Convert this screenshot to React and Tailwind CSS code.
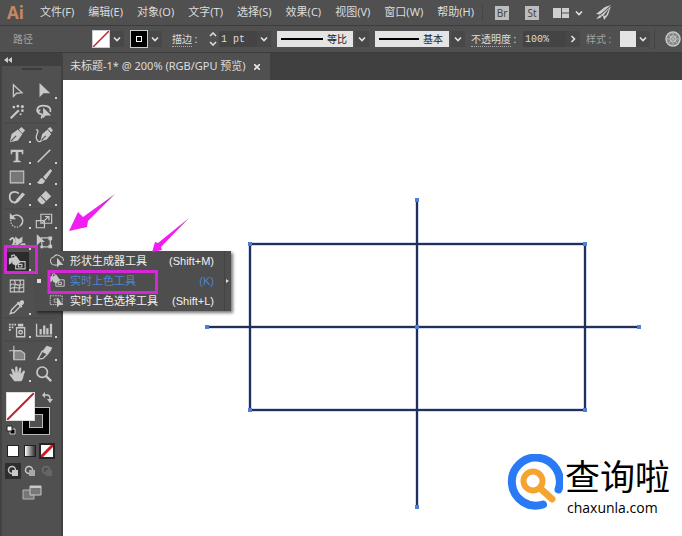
import React from "react";

const MENUS = ["文件(F)", "编辑(E)", "对象(O)", "文字(T)", "选择(S)", "效果(C)", "视图(V)", "窗口(W)", "帮助(H)"];

function Chevron({ right = false }) {
  return (
    <svg className="h-2 w-2" viewBox="0 0 8 8" fill="none" stroke="#e2e2e2" strokeWidth="1.6">
      <path d={right ? "M2.5 1 5.5 4 2.5 7" : "M1 2.5 4 5.5 7 2.5"} />
    </svg>
  );
}

function DropButton({ label, right }) {
  return (
    <button aria-label={label} className="flex h-4 w-3.5 shrink-0 items-center justify-center bg-[#484848]">
      <Chevron right={right} />
    </button>
  );
}

const S = { fill: "none", stroke: "#c8c8c8", strokeWidth: 1.5 };
const F = { fill: "#c8c8c8" };

const ICONS = {
  select: <path {...S} d="M6 3v13l3.500-3.500 6-.5z" />,
  direct: <path {...F} d="M5 1v16l4.500-4.500H17z" />,
  wand: (
    <g>
      <path {...S} strokeWidth="2.400" d="M3 17 12 8" />
      <g {...F}>
        <circle cx="6.500" cy="4.500" r="1.500" /><circle cx="11" cy="3.500" r="1.500" /><circle cx="16" cy="4" r="1.700" />
        <circle cx="16" cy="8.500" r="1.500" /><circle cx="14" cy="12.500" r="1.200" />
      </g>
    </g>
  ),
  lasso: (
    <g>
      <path {...S} strokeWidth="2" d="M6 12C0 10 2 3 9 3s9 3 8 7M6 8c-3 0-3 4 0 4s2 3 1 5" />
      <path {...F} d="M9 5v12l3-3h6z" />
    </g>
  ),
  pen: (
    <g>
      <path {...F} d="M2 18 4 9l7-5 5 5-5 7zM12 4l3-3 4 4-3 3z" />
      <path d="m3 17 6-6" stroke="#505050" strokeWidth="1.200" />
    </g>
  ),
  curve: (
    <g>
      <path {...F} d="M6 17 8 9l6-5 4 5-5 6zM14 3l3-2 3 4-2 2z" />
      <path d="m7 16 5-5" stroke="#505050" strokeWidth="1.200" />
      <path {...S} d="M1 4c6 0-2 7 1 11 1 3 4 3 5 1" />
    </g>
  ),
  text: <path {...F} d="M3 3h14v5h-1.500L15 5.500h-3.500V15l2.500.5V17H6v-1.500L8.500 15V5.500H5L4.500 8H3z" />,
  line: <path {...S} strokeWidth="1.800" d="M3 17 17 3" />,
  rect: <path fill="#777" stroke="#c8c8c8" strokeWidth="1.200" d="M2.500 3.500h15v13h-15z" />,
  brush: <path {...F} d="M17 1 9 10l3 3 7-10zM8 11c-3 0-3 4-6 5 4 3 9 2 9-2z" />,
  shaper: (
    <g>
      <path {...S} strokeWidth="2" d="M12 5C7 1 1 4 2 10s8 6 9 2" />
      <path {...F} d="m7 17 2-5 7-8 3 2-7 8z" />
    </g>
  ),
  eraser: (
    <g>
      <path {...F} d="M3 11 12 2l6 6-9 9H7l-4-4z" />
      <path d="m6.500 8 6 6" stroke="#505050" strokeWidth="1.200" />
    </g>
  ),
  rotate: (
    <g>
      <path {...S} strokeWidth="1.800" d="M5 5c8-5 15 4 9 10" />
      <path {...S} strokeDasharray="1.5 1.5" d="M14 15c-5 4-11 1-11-6" />
      <path {...F} d="M2 1v7h7z" />
    </g>
  ),
  scale: (
    <g {...S} strokeWidth="1.300">
      <path d="M6.500 2.500h12v10h-12zM1.500 9.500h9v8h-9z" />
      <path d="m8 12 7-7M11 5h4.500v4.500" />
    </g>
  ),
  width: (
    <g>
      <path {...S} strokeWidth="2.200" d="M2 16c2-4 4 1 6-2s4 3 6 0 3 0 5-2M2 8c4-6 7 1 3 6" />
      <path {...F} d="M8 4l4 3 4-3v6l-5 3-3-2z" />
    </g>
  ),
  free: (
    <g>
      <path {...S} strokeWidth="1.300" d="M7 5.500h10v10H8z" />
      <path {...F} d="M2 1v13l4-4h5zM15 4h4v4h-4zM15 13h4v4h-4zM6 14h3v3H6z" />
    </g>
  ),
  bucket: (
    <g>
      <path {...S} strokeWidth="1.200" d="M10 8.500h9v8H8.500v-4M11.500 11.500h4v3h-4z" />
      <path {...F} d="M4 5 9 2l5 7-5 4-4-2zM1 5c2-2 4 0 4 0L4 10l-3 2z" />
      <path {...S} strokeWidth="1.200" d="M5 6 4 1.500 7 1l3 6" />
    </g>
  ),
  mesh: (
    <g {...S} strokeWidth="1.200">
      <path d="M2.500 3.500h15v13h-15zM3 9c4-4 9 3 14-1M3 13c5-4 9 2 14-2M7 4c4 4-3 8 1 13M13 4c3 4-3 8 0 13" />
    </g>
  ),
  dropper: (
    <g>
      <path {...S} d="M2.500 17.500 4 13l7-7 3 3-7 7z" />
      <path {...F} d="m10 5 1.500-1 1 1C15 0 20 4 17 7l-2 1.500 1 1L14.500 11z" />
    </g>
  ),
  spray: (
    <g>
      <path {...S} d="M9.500 7.500h9v10h-9z" />
      <circle {...S} cx="14" cy="12.500" r="2" />
      <path {...F} d="M11 3h6v3h-6zM1 3h2v2H1zM4 3h2v2H4zM7 3h2v2H7zM1 6h2v2H1zM4 6h2v2H4zM1 9h2v2H1z" />
    </g>
  ),
  graph: <path {...F} d="M1 3h1.500v13H19v1.500H1zM5 9h2.500v6H5zM9 5h2.500v10H9zM12.500 8H15v7h-2.500zM16.500 3H19v12h-2.500z" />,
  artboard: (
    <g>
      <path fill="#858585" stroke="#c8c8c8" strokeWidth="1.200" d="M6.500 7.500h8l4 3v7h-12z" />
      <path {...S} strokeWidth="1.200" d="M6.500 2v15M1 7.500h13" />
    </g>
  ),
  slice: (
    <g>
      <path {...S} d="M3 17 8 8l6 3-5 5z" />
      <path {...F} d="m8 8 5-6 6 2-1 3-4 5z" />
    </g>
  ),
  hand: <path {...F} d="M7 18 1.500 10.500c1-1.500 2.500-.5 4 1L3.500 5C5 3 6.500 4.500 8 9V2.500c1-1.200 2.500-1 2.500.5l.5 6L12.500 3.500c1-1.200 2.500-.5 2.300 1L14 10l3-3.500c1-.7 2.500 0 1.500 2-2 4-1 7-4 9.500z" />,
  zoom: (
    <g>
      <circle {...S} strokeWidth="1.900" cx="8" cy="8" r="5.800" />
      <path {...S} strokeWidth="2.600" d="m12 12 6 6" />
    </g>
  ),
  builder: (
    <g>
      <path {...S} strokeWidth="1.300" d="M10 15C4 16 1 12 2 9c0-2 2-4 4-4 2-4 7-3 9 0 3 0 3 3 3 5" />
      <path {...F} d="M10 6v12l3-3h5z" />
    </g>
  ),
  liveSelect: (
    <g>
      <path {...S} strokeWidth="1.200" strokeDasharray="2 1" d="M1.500 3.500h15v11h-15z" />
      <path {...S} strokeWidth="1" d="M6.500 7.500h6v4h-6z" />
      <path {...F} d="M10 6v12l3-3h5z" />
    </g>
  ),
};

function Icon({ name, className = "h-[18px] w-[18px]" }) {
  return <svg className={className} viewBox="0 0 20 20">{ICONS[name]}</svg>;
}

const GROUPS = [
  [["select", "选择工具"], ["direct", "直接选择工具", 1], ["wand", "魔棒工具"], ["lasso", "套索工具"]],
  [["pen", "钢笔工具", 1], ["curve", "曲率工具"], ["text", "文字工具", 1], ["line", "直线段工具", 1], ["rect", "矩形工具", 1], ["brush", "画笔工具", 1], ["shaper", "Shaper 工具", 1], ["eraser", "橡皮擦工具", 1]],
  [["rotate", "旋转工具", 1], ["scale", "比例缩放工具", 1], ["width", "宽度工具", 1], ["free", "自由变换工具"], ["bucket", "实时上色工具", 1], null],
  [["mesh", "网格工具"], null, ["dropper", "吸管工具", 1], null],
  [["spray", "符号喷枪工具", 1], ["graph", "柱形图工具", 1]],
  [["artboard", "画板工具"], ["slice", "切片工具", 1], ["hand", "抓手工具", 1], ["zoom", "缩放工具"]],
];

function Tool({ name, label, more }) {
  return (
    <button aria-label={label} className="relative flex h-[21px] items-center justify-center">
      <span className={name === "bucket" ? "flex h-[21px] w-6 items-center justify-center bg-[#2b2b2b]" : "flex"}>
        <Icon name={name} />
      </span>
      {more && <span className="absolute right-0 bottom-0.5 h-0.5 w-0.5 bg-[#d0d0d0]" />}
    </button>
  );
}

function ColorControls() {
  return (
    <div>
      <div className="relative mx-1 mt-2 h-[43px]">
        <button aria-label="描边颜色" className="absolute top-[15px] left-4 flex h-7 w-7 items-center justify-center border border-[#bbb] bg-black">
          <span className="h-3.5 w-3.5 border border-[#bbb] bg-[#505050]" />
        </button>
        <button aria-label="填色" className="absolute top-0 left-0 h-[29px] w-[29px] border border-[#ddd] bg-white">
          <svg className="h-full w-full" viewBox="0 0 26 26"><path d="M0 26 26 0" stroke="#c22634" strokeWidth="2" /></svg>
        </button>
        <button aria-label="互换填色和描边" className="absolute top-0 right-1 h-3 w-3">
          <svg viewBox="0 0 12 12"><path d="M3 3h3q3 0 3 4" fill="none" stroke="#c8c8c8" strokeWidth="1.400" /><path d="M4 0v6L1 3zM6 7h6l-3 4z" fill="#c8c8c8" /></svg>
        </button>
        <button aria-label="默认填色和描边" className="absolute bottom-0 left-0 h-2.5 w-2.5">
          <svg viewBox="0 0 10 10"><path d="M4 4h5v5H4z" fill="#000" stroke="#ccc" /><path d="M1 1h5v5H1z" fill="#fff" stroke="#222" /></svg>
        </button>
      </div>
      <div className="mt-2 ml-[3px] flex gap-px">
        <button aria-label="颜色" className="flex h-4 w-4 items-center justify-center"><span className="h-3 w-3 border border-[#222] bg-white" /></button>
        <button aria-label="渐变" className="flex h-4 w-4 items-center justify-center"><span className="h-3 w-3 border border-[#222] bg-linear-to-r from-white to-[#333]" /></button>
        <button aria-label="无" className="flex h-4 w-4 items-center justify-center bg-[#262626]">
          <svg className="h-3 w-3 bg-white" viewBox="0 0 12 12"><path d="M0 12 12 0" stroke="#d01820" strokeWidth="3" /></svg>
        </button>
      </div>
      <div className="mt-1 ml-[3px] flex gap-px">
        {["正常绘图", "背面绘图", "内部绘图"].map((label, i) => (
          <button key={label} aria-label={label} className={["flex h-4 w-4 items-center justify-center bg-[#2e2e2e]", "flex h-4 w-4 items-center justify-center", "flex h-4 w-4 items-center justify-center opacity-25"][i]}>
            <svg className="h-3 w-3" viewBox="0 0 12 12">
              <circle cx="5" cy="5" r="3.500" fill="none" stroke="#c8c8c8" strokeWidth="1.500" />
              <path d="M5 5h6v6H5z" fill={i === 0 ? "#c8c8c8" : "#a8a8a8"} />
            </svg>
          </button>
        ))}
      </div>
      <button aria-label="更改屏幕模式" className="mx-auto mt-1.5 block">
        <svg className="h-4 w-5" viewBox="0 0 20 16">
          <path d="M1 5h11v9H1z" fill="#777" stroke="#b5b5b5" /><path d="M8 1h11v9H8z" fill="#777" stroke="#c8c8c8" /><path d="M8 1h11v2H8z" fill="#c8c8c8" />
        </svg>
      </button>
    </div>
  );
}

function Toolbox() {
  return (
    <aside className="w-[63px] shrink-0 border-x-2 border-x-[#424242] bg-[#505050]">
      <div className="h-[13px] bg-[#404040] pl-0.5">
        <button aria-label="折叠" className="block pt-1">
          <svg className="h-1.5 w-2" viewBox="0 0 8 6"><path d="M4 0v6L0 3zM8 0v6L4 3z" fill="#ccc" /></svg>
        </button>
      </div>
      <div className="mx-auto mt-0.5 h-0.5 w-5 bg-[#3c3c3c]" />
      <div className="mt-2.5 mr-1 ml-0.5 flex flex-col divide-y-2 divide-[#4b4b4b]">
        {GROUPS.map((g, i) => (
          <div key={i} className="grid grid-cols-2">
            {g.map((t, j) => (t ? <Tool key={j} name={t[0]} label={t[1]} more={t[2]} /> : <span key={j} />))}
          </div>
        ))}
      </div>
      <ColorControls />
    </aside>
  );
}

const FLYOUT = [
  ["builder", "形状生成器工具", "(Shift+M)"],
  ["bucket", "实时上色工具", "(K)"],
  ["liveSelect", "实时上色选择工具", "(Shift+L)"],
];

function Flyout() {
  return (
    <div className="absolute top-[251px] left-[35px] flex w-[196px] bg-[#4e4e4e] text-[11px] text-[#f0f0f0] shadow-[2px_2px_3px_#00000088]">
      <div className="flex-1">
        {FLYOUT.map(([icon, label, key], i) => (
          <button key={label} className={i === 1 ? "flex h-5 w-full items-center pr-2.5 text-[#4a86d0]" : "flex h-5 w-full items-center pr-2.5"}>
            <span className="flex w-3.5 pl-0.5">{i === 1 && <span className="h-1 w-1 bg-[#ddd]" />}</span>
            <Icon name={icon} className="h-4 w-4" />
            <span className="ml-[5px] flex-1 text-left whitespace-nowrap">{label}</span>
            <span className="font-['Liberation_Sans']">{key}</span>
          </button>
        ))}
      </div>
      <div className="flex w-[7px] items-center justify-center border-l border-[#444]">
        <svg className="h-1 w-1" viewBox="0 0 4 4"><path d="M0 0v4l3-2z" fill="#ddd" /></svg>
      </div>
    </div>
  );
}

const POINTS = [[187, 164], [522, 164], [187, 330], [522, 330], [354, 120], [354, 427], [144, 247], [576, 247], [354, 247]];

function Drawing() {
  const d = "M187 164h335v166H187zM354 120v307M144 247h432";
  return (
    <svg className="absolute top-0 left-0 h-full w-full" aria-label="画板">
      <path d={d} fill="none" stroke="#4c74bd" strokeWidth="2.500" />
      <path d={d} fill="none" stroke="#242f56" strokeWidth="2" />
      {POINTS.map(([x, y], i) => <rect key={i} x={x - 2} y={y - 2} width="4" height="4" fill="#4f7fd8" />)}
    </svg>
  );
}

function Annotations() {
  return (
    <svg className="pointer-events-none absolute top-0 left-0 h-full w-full" fill="none" stroke="#d726d6" strokeWidth="3">
      <defs>
        <linearGradient id="tail" x1="0" y1="1" x2="1" y2="0">
          <stop offset="0.6" stopColor="#f01ef0" />
          <stop offset="1" stopColor="#a04aa0" />
        </linearGradient>
      </defs>
      <path d="M5.500 246.500h31v26h-31z" />
      <path d="M49 271.500h107.500v21H49z" />
      <path d="m69 231 9-19 5 5 32-23-27 27-1 6z" fill="url(#tail)" stroke="none" />
      <path d="m152 252 3-10 3 1 31-25-28 29 1 3z" fill="url(#tail)" stroke="none" />
    </svg>
  );
}

function Brand() {
  return (
    <a href="#chaxunla" className="absolute right-3 bottom-5 flex items-start gap-0.5 text-black">
      <svg className="h-14 w-14" viewBox="0 0 56 56" fill="none">
        <path d="M51.500 35.500A24 24 0 1 0 36 50.500" stroke="#2b7af5" strokeWidth="8" strokeLinecap="round" />
        <circle cx="26" cy="27" r="9.500" stroke="#f5a52f" strokeWidth="6" />
        <path d="m34 35 11 10" stroke="#f5a52f" strokeWidth="7" strokeLinecap="round" />
      </svg>
      <span className="flex flex-col">
        <span className="text-[35px] leading-[46px]">查询啦</span>
        <span className="pl-0.5 font-['Open_Sans'] text-[14px] leading-4">chaxunla.com</span>
      </span>
    </a>
  );
}

function StrokeSelect({ label, value, className }) {
  return (
    <div className="flex items-center gap-0.5">
      <div className={className}>
        <span className="h-0.5 flex-1 bg-black" />
        <select aria-label={label} className="w-[22px] appearance-none text-[10px] text-[#222]"><option>{value}</option></select>
      </div>
      <DropButton label={label} />
    </div>
  );
}

function MenuBar() {
  return (
    <header className="flex h-[26px] items-center border-b border-[#3c3c3c] pl-[7px]">
      <span className="w-[33px] text-[17px] leading-6 font-bold text-[#c48763]">Ai</span>
      <nav className="flex gap-3.5 whitespace-nowrap">
        {MENUS.map((m) => <button key={m}>{m}</button>)}
      </nav>
      <div className="ml-2 h-4 w-px bg-[#454545]" />
      <div className="ml-3 flex items-center gap-4">
        <button className="h-3.5 w-3.5 bg-[#bdbdbd] text-center text-[10px] leading-[14px] text-[#444]">Br</button>
        <button className="h-3.5 w-3.5 bg-[#bdbdbd] text-center text-[10px] leading-[14px] text-[#444]">St</button>
      </div>
      <button aria-label="排列文档" className="ml-3.5 flex items-center gap-1.5">
        <svg className="h-2.5 w-4" viewBox="0 0 16 10" fill="#cfcfcf"><path d="M0 0h8v10H0zM9 0h7v4.500H9zM9 5.500h7V10H9z" /></svg>
        <Chevron />
      </button>
      <button aria-label="GPU 性能" className="ml-3">
        <svg className="h-4 w-4" viewBox="0 0 16 16" fill="#cfcfcf"><path d="M16 0 10 2 1 9l4 .5zM15 2 6 10l1 1 4-.5zM16 1l-3 9-4 5-1-4zM5 10l-4 4 4-1 2-2z" /></svg>
      </button>
    </header>
  );
}

function ControlBar() {
  return (
    <div className="flex h-[27px] items-center overflow-hidden border-b border-[#3c3c3c] pl-[13px] whitespace-nowrap">
      <span className="w-[79px] shrink-0 text-[10px] text-[#a2a2a2]">路径</span>
      <button aria-label="填色" className="h-[18px] w-[18px] shrink-0 border border-[#ccc] bg-white">
        <svg viewBox="0 0 16 16"><path d="M0 16 16 0" stroke="#b92735" strokeWidth="1.500" /></svg>
      </button>
      <DropButton label="填色选项" />
      <button aria-label="描边" className="ml-1.5 flex h-[18px] w-[18px] shrink-0 items-center justify-center border border-[#ccc] bg-black">
        <span className="flex h-1.5 w-1.5 border border-white" />
      </button>
      <DropButton label="描边选项" />
      <label htmlFor="stroke" className="ml-2.5 w-[31px] shrink-0 text-[10px]"><span className="border-b border-dotted border-[#aaa]">描边</span> :</label>
      <button aria-label="调整粗细" className="ml-1 shrink-0">
        <svg className="h-3.5 w-3" viewBox="0 0 12 14" fill="none" stroke="#e0e0e0" strokeWidth="1.500"><path d="m3 4 3-3 3 3M3 10l3 3 3-3" /></svg>
      </button>
      <input id="stroke" defaultValue="1 pt" className="h-4 w-[38px] min-w-0 shrink-0 bg-[#444] pl-0.5 font-['Liberation_Mono'] text-[10px]" />
      <DropButton label="粗细列表" />
      <div className="ml-1.5 flex shrink-0 gap-1.5">
        <StrokeSelect label="变量宽度" value="等比" className="flex h-4 w-[76px] items-center gap-1 bg-[#e4e4e4] px-1" />
        <StrokeSelect label="画笔定义" value="基本" className="flex h-4 w-[74px] items-center gap-1 bg-[#e4e4e4] px-1" />
      </div>
      <label htmlFor="opacity" className="ml-1.5 w-[52px] shrink-0 text-[10px]"><span className="border-b border-dotted border-[#aaa]">不透明度</span> :</label>
      <input id="opacity" defaultValue="100%" className="h-4 w-[43px] min-w-0 shrink-0 bg-[#444] pl-0.5 font-['Liberation_Mono'] text-[10px]" />
      <DropButton label="不透明度选项" right />
      <span className="ml-1.5 w-[34px] shrink-0 text-[10px] text-[#a2a2a2]">样式 :</span>
      <button aria-label="图形样式" className="h-4 w-4 shrink-0 bg-[#e4e4e4]" />
      <DropButton label="样式列表" />
      <div className="ml-1 h-5 w-px shrink-0 bg-[#434343]" />
      <button aria-label="重新着色图稿" className="ml-2.5 shrink-0">
        <svg className="h-4 w-4" viewBox="0 0 16 16" fill="none" stroke="#c8c8c8"><circle cx="8" cy="8" r="7" fill="#888" strokeWidth="1.500" /><circle cx="8" cy="8" r="3" /><path d="M8 1v14M1 8h14M3 3l10 10M13 3 3 13" stroke="#b0b0b0" /></svg>
      </button>
    </div>
  );
}

export default function App() {
  return (
    <div className="relative flex min-h-screen flex-col overflow-hidden bg-[#505050] font-['Noto_Sans','Noto_Sans_CJK_SC',sans-serif] text-[11px] text-[#dcdcdc]">
      <MenuBar />
      <ControlBar />
      <div className="flex flex-1">
        <Toolbox />
        <main className="flex min-w-0 flex-1 flex-col">
          <div className="flex h-[27px] bg-[#404040]">
            <div className="flex items-center gap-1.5 bg-[#505050] pr-2 pl-[7px] whitespace-nowrap">
              <span>未标题-1* @ 200% (RGB/GPU 预览)</span>
              <button aria-label="关闭" className="p-0.5">
                <svg className="h-1.5 w-1.5" viewBox="0 0 6 6" stroke="#e8e8e8" strokeWidth="1.600"><path d="m0 0 6 6M6 0 0 6" /></svg>
              </button>
            </div>
          </div>
          <div className="relative flex-1 bg-white">
            <Drawing />
            <Brand />
          </div>
        </main>
      </div>
      <Flyout />
      <Annotations />
    </div>
  );
}
